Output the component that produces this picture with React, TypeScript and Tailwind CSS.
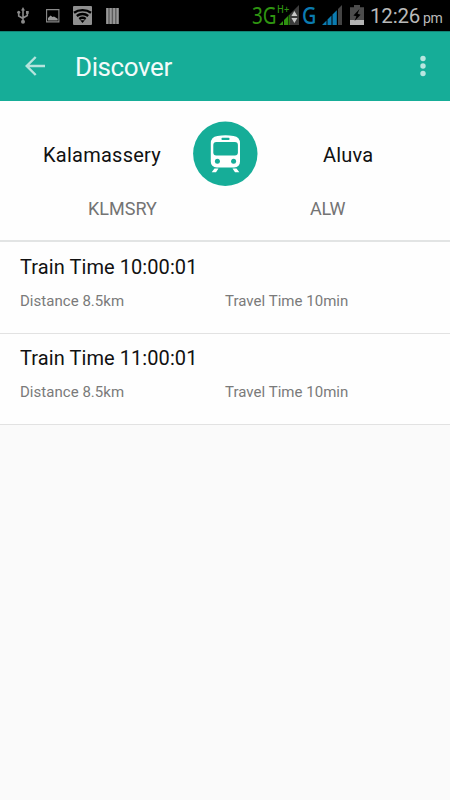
import React from 'react'

interface Train {
  id: number
  time: string
  distance: string
  duration: string
}

const trains: Train[] = [
  { id: 1, time: '10:00:01', distance: '8.5km', duration: '10min' },
  { id: 2, time: '11:00:01', distance: '8.5km', duration: '10min' },
]

function UsbIcon() {
  return (
    <svg width="12" height="17" viewBox="0 0 12 17" fill="none" stroke="#8a8a8a" strokeWidth="1.6">
      <path d="M6 3v11M1.7 5v4L6 11.5M10.3 5v3.5L6 11" />
      <path d="M6 0l2 3.5H4z" fill="#8a8a8a" stroke="none" />
      <circle cx="6" cy="14.8" r="2" fill="#8a8a8a" stroke="none" />
      <circle cx="1.7" cy="5.3" r="1.5" fill="#8a8a8a" stroke="none" />
      <path d="M9 4h2.7v2.8H9z" fill="#8a8a8a" stroke="none" />
    </svg>
  )
}

function PictureIcon() {
  return (
    <svg width="14" height="14" viewBox="0 0 14 14">
      <path d="M.6.6h12.3v12.3H.6z" fill="none" stroke="#8a8a8a" strokeWidth="1.1" />
      <path d="M2 11.5V9l2.6-2.5L6.5 8l1.5-.6 3.7 2.3v1.8z" fill="#9a9a9a" />
    </svg>
  )
}

function WifiIcon() {
  return (
    <svg width="19" height="19" viewBox="0 0 19 19">
      <rect width="19" height="19" rx="1" fill="#8f8f8f" />
      <g fill="none" stroke="#000" strokeWidth="2.4">
        <path d="M1 6.8c4.8-3.6 12.2-3.6 17 0" />
        <path d="M3.8 10c3.3-2.6 8.1-2.6 11.4 0" />
        <path d="M6.3 12.9c1.9-1.3 4.5-1.3 6.4 0" />
      </g>
      <path d="M7.2 14.3h4.6L9.5 17z" />
    </svg>
  )
}

function BarcodeIcon() {
  return (
    <svg width="13" height="16" viewBox="0 0 13 16">
      <path d="M0 0h13v16H0z" fill="#5c5c5c" />
      <path d="M.3 0h2v16h-2zM3.7 0h2v16h-2zM7.1 0h2v16h-2zM10.5 0h2v16h-2z" fill="#989898" />
    </svg>
  )
}

function DataSignalIcon() {
  return (
    <svg width="20" height="20" viewBox="0 0 20 20">
      <path d="M11 9l9-9v20h-9z" fill="#3c3c3c" />
      <path d="M0 20l4-4v4zM5 15l4-4v9H5zM9.6 10.4l1.2-1.2V20H9.6z" fill="#2f9411" />
      <path d="M15.4 6l3 5h-6zM12.4 13h6l-3 5z" fill="#c8c8c8" />
    </svg>
  )
}

function SignalIcon() {
  return (
    <svg width="20" height="20" viewBox="0 0 20 20">
      <path d="M0 20l4.5-4.5V20zM5.5 14.5l4-4V20h-4zM10.5 9.5l4.3-4.3V20h-4.3z" fill="#0b7bb0" />
      <path d="M16 4l4-4v20h-4z" fill="#444" />
    </svg>
  )
}

function BatteryIcon() {
  return (
    <svg width="14" height="20" viewBox="0 0 14 20">
      <path d="M4 0h6v2.3h4V20H0V2.3h4z" fill="#4c4c4c" />
      <path d="M0 15h14v5H0z" fill="#b4b4b4" />
      <path d="M9.5 4L3.4 10.5l3 .8L4.6 16l6-6.3-3-1z" fill="#000" />
    </svg>
  )
}

function TrainIcon() {
  return (
    <svg width="65" height="65" viewBox="0 0 65 65">
      <circle cx="32.3" cy="32.8" r="32.2" fill="#16ad98" />
      <path
        d="M24.5 14.9Q32.5 13.7 40.5 14.9Q47 15.9 47 22.3V40.5Q47 46.2 41 46.5H24Q17.8 46.2 17.8 40.5V22.3Q17.8 15.9 24.5 14.9Z"
        fill="#fff"
      />
      <rect x="28.5" y="16.8" width="8" height="2.2" rx=".8" fill="#16ad98" />
      <rect x="20.3" y="21" width="24.6" height="13.4" rx="3" fill="#16ad98" />
      <circle cx="24.4" cy="40.2" r="2.5" fill="#16ad98" />
      <circle cx="40.6" cy="40.2" r="2.5" fill="#16ad98" />
      <path d="M21.5 47.6h4L23 51.2h-4.3zM39.5 47.6h4l2.8 3.6H42z" fill="#fff" />
    </svg>
  )
}

function StatusBar() {
  return (
    <div className="flex h-[31px] items-start bg-black">
      <div className="flex h-full items-center pl-[17px]">
        <UsbIcon />
        <div className="ml-[17px]"><PictureIcon /></div>
        <div className="ml-[13px]"><WifiIcon /></div>
        <div className="ml-[14px]"><BarcodeIcon /></div>
      </div>
      <div className="ml-auto flex h-full pr-2">
        <span className="w-[25px] origin-left scale-x-[0.82] pt-[3px] font-['Noto_Sans',sans-serif] text-[23px] leading-6 text-[#2f9411]">3G</span>
        <div className="relative w-[22px] pl-0.5 pt-[5px]">
          <span className="absolute left-0 top-[3px] origin-left scale-x-[0.88] font-['Noto_Sans',sans-serif] text-[10.5px] font-medium leading-3 text-[#2f9411]">H+</span>
          <DataSignalIcon />
        </div>
        <span className="ml-[3px] w-5 origin-left scale-x-[0.86] pt-[3px] font-['Noto_Sans',sans-serif] text-[23px] font-medium leading-6 text-[#0b7bb0]">G</span>
        <div className="pt-[5px]"><SignalIcon /></div>
        <div className="ml-2 pt-[5px]"><BatteryIcon /></div>
        <span className="ml-[6px] w-[53px] pt-1 text-[20.5px] leading-6 tracking-[-0.2px] text-[#b9b9b9]">12:26</span>
        <span className="w-[19px] pt-[8px] text-[14px] leading-5 tracking-[-0.3px] text-[#b9b9b9]">pm</span>
      </div>
    </div>
  )
}

function Toolbar() {
  return (
    <header className="flex h-[70px] items-center border-t border-[#138577] bg-[#16ad98] pl-[25px] pr-[22.5px] pb-px">
      <svg width="20" height="20" viewBox="0 0 20 20" fill="none" stroke="#b5e4dd" strokeWidth="2.4">
        <path d="M20 10H2M10.7 1L1.7 10l9 9" />
      </svg>
      <h1 className="ml-[30px] pt-0.5 text-[26px] leading-8 tracking-[-0.4px] text-[#f3fbfa]">Discover</h1>
      <svg className="ml-auto" width="10" height="22" viewBox="0 0 10 22" fill="#b9e6e0">
        <circle cx="5" cy="3.5" r="2.7" />
        <circle cx="5" cy="11" r="2.7" />
        <circle cx="5" cy="18.5" r="2.7" />
      </svg>
    </header>
  )
}

function RouteHeader() {
  return (
    <section className="h-[141px] border-b-2 border-[#e2e4e4] bg-[#fefefe] pt-[19px]">
      <div className="flex h-[66px] items-center">
        <span className="w-[193px] pl-[43px] pt-[4px] text-[20px] leading-6 tracking-[0.25px] text-[#111]">Kalamassery</span>
        <TrainIcon />
        <span className="ml-[65px] pt-[4px] text-[20px] leading-6 tracking-[0.2px] text-[#111]">Aluva</span>
      </div>
      <div className="flex pt-[11px] text-[18px] leading-6 text-[#747474]">
        <span className="w-[310px] pl-[88px]">KLMSRY</span>
        <span className="tracking-[-0.3px]">ALW</span>
      </div>
    </section>
  )
}

function TrainRow({ train }: { train: Train }) {
  return (
    <li className="h-[91px] border-b border-[#e2e2e2] bg-[#fefefe] pl-5 pt-3">
      <p className="text-[20px] leading-6 tracking-[0.08px] text-[#111]">Train Time {train.time}</p>
      <div className="flex pt-3 text-[15px] leading-5 tracking-[0.03px] text-[#7a7a7a]">
        <span className="w-[205px]">Distance {train.distance}</span>
        <span>Travel Time {train.duration}</span>
      </div>
    </li>
  )
}

export default function App() {
  return (
    <div className="h-[800px] w-[450px] overflow-hidden bg-[#fafafa] font-[Roboto,sans-serif]">
      <StatusBar />
      <Toolbar />
      <RouteHeader />
      <ul className="bg-[#fefefe] pt-px">
        {trains.map((train) => (
          <TrainRow key={train.id} train={train} />
        ))}
      </ul>
    </div>
  )
}
